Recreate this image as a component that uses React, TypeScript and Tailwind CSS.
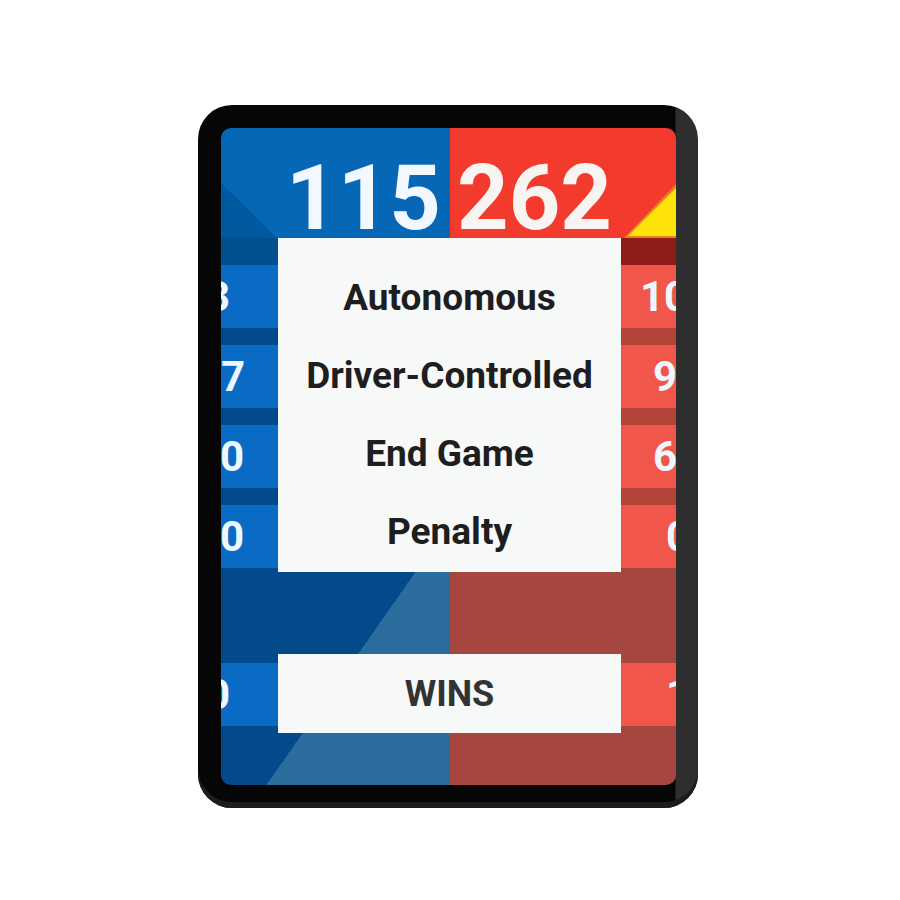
import React from "react";

const leftRows = [
  { v: "3", pr: "pr-[48px]" },
  { v: "7", pr: "pr-[33px]" },
  { v: "0", pr: "pr-[34px]" },
  { v: "0", pr: "pr-[34px]" },
];

const rightRows = [
  { v: "10", pl: "pl-[19px]" },
  { v: "9", pl: "pl-[32px]" },
  { v: "6", pl: "pl-[32px]" },
  { v: "0", pl: "pl-[45px]" },
];

const categories = ["Autonomous", "Driver-Controlled", "End Game", "Penalty"];

const font = { fontFamily: "Roboto, 'Noto Sans', sans-serif" };

function SideCell({ children, className }: { children: React.ReactNode; className: string }) {
  return (
    <div className={`flex h-[63px] items-center overflow-hidden whitespace-nowrap text-[42px] font-bold leading-none text-[#eef6ff] ${className}`}>
      {children}
    </div>
  );
}

export default function App() {
  return (
    <div className="min-h-[900px] w-[900px] bg-white pl-[198px] pt-[105px]" style={font}>
      {/* tablet bezel */}
      <div className="w-[500px] rounded-[34px] p-[23px] pr-[22px] [background:linear-gradient(90deg,#060606_95.4%,#2e2e2e_95.6%)] shadow-[inset_0_-6px_0_#1c1c1c]">
        <div className="flex h-[657px] w-[455px] flex-col overflow-hidden rounded-[10px]">
          {/* scores */}
          <div className="flex h-[110px] shrink-0">
            <div className="relative flex w-[229px] items-start justify-end bg-[#0667b6] pr-[9px] pt-[31px]">
              <svg className="absolute bottom-0 left-0" width="56" height="56" viewBox="0 0 56 56">
                <polygon points="0,1 0,56 56,56" fill="#00599e" />
              </svg>
              <span className="relative text-[90px] font-bold leading-[80px] text-[#f2f8ff]">115</span>
            </div>
            <div className="relative flex flex-1 items-start bg-[#f23b2c] pl-[7px] pt-[31px]">
              <span className="relative text-[90px] font-bold leading-[80px] text-[#f7f4f2]">262</span>
              <svg className="absolute bottom-0 right-0" width="52" height="54" viewBox="0 0 52 54">
                <polygon points="52,0 52,54 0,54" fill="#e8821c" />
                <polygon points="52,4 52,52 4,52" fill="#fde30a" />
              </svg>
            </div>
          </div>

          {/* categories */}
          <div className="flex flex-1 [background:linear-gradient(125deg,transparent_70%,#2b6c9f_70%)_left_top/229px_100%_no-repeat,linear-gradient(90deg,#034a8a_229px,#a5473f_229px)]">
            <div className="flex w-[57px] shrink-0 flex-col">
              <div className="h-[27px] bg-[#00508f]" />
              <div className="flex flex-col gap-[17px]">
                {leftRows.map((r, i) => (
                  <SideCell key={i} className={`justify-end bg-[#0a6bc4] ${r.pr}`}>
                    {r.v}
                  </SideCell>
                ))}
              </div>
              <div className="mt-[95px]">
                <SideCell className="h-[62px] justify-end bg-[#0a6bc4] pr-[48px]">0</SideCell>
              </div>
            </div>

            <div className="flex w-[343px] shrink-0 flex-col">
              <div className="flex h-[334px] flex-col bg-[#f7f8f8] pt-[21px]">
                {categories.map((c) => (
                  <div key={c} className="flex h-[78px] items-center justify-center text-[37px] font-bold text-[#1e1e1e]">
                    {c}
                  </div>
                ))}
              </div>
              <div className="mt-[82px] flex h-[79px] items-center justify-center bg-[#f7f8f8] text-[36px] font-bold text-[#333333]">
                WINS
              </div>
            </div>

            <div className="flex w-[55px] shrink-0 flex-col">
              <div className="h-[27px] bg-[#8f1c16]" />
              <div className="flex flex-col gap-[17px] bg-[#b3443a]">
                {rightRows.map((r, i) => (
                  <SideCell key={i} className={`bg-[#f0574a] ${r.pl}`}>
                    {r.v}
                  </SideCell>
                ))}
              </div>
              <div className="mt-[95px]">
                <SideCell className="h-[62px] bg-[#f0574a] pl-[45px]">1</SideCell>
              </div>
            </div>
          </div>
        </div>
      </div>
    </div>
  );
}
